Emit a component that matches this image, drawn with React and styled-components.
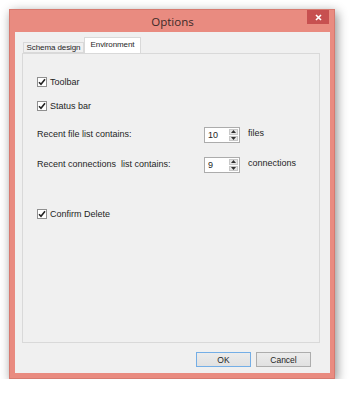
import React from "react";
import styled, { createGlobalStyle } from "styled-components";

const GlobalStyle = createGlobalStyle`
  html, body {
    margin: 0;
    padding: 0;
    background: #ffffff;
  }
  body {
    font-family: "Liberation Sans", Arial, sans-serif;
    font-size: 9px;
    color: #1e1e1e;
  }
`;

const Window = styled.div`
  box-sizing: border-box;
  margin: 9px 0 0 9px;
  width: 326px;
  height: 370px;
  background: #e98b80;
  border: 1px solid #d67a70;
  box-shadow: 2px 3px 10px rgba(0, 0, 0, 0.45);
  padding: 0 4px 5px 5px;
  display: flex;
  flex-direction: column;
`;

const TitleBar = styled.div`
  position: relative;
  height: 22px;
  display: flex;
  align-items: center;
  justify-content: center;
`;

const Title = styled.span`
  font-family: "Open Sans", "Noto Sans", sans-serif;
  font-size: 11.5px;
  color: #3a2a28;
  margin-top: 1px;
`;

const CloseButton = styled.div`
  position: absolute;
  top: 0;
  right: 1px;
  width: 22px;
  height: 14px;
  background: #c75050;
  display: flex;
  align-items: center;
  justify-content: center;
`;

const Client = styled.div`
  flex: 1;
  background: #f0f0f0;
  padding: 6px 10px 0 7px;
  display: flex;
  flex-direction: column;
`;

const TabStrip = styled.div`
  display: flex;
  align-items: flex-end;
  height: 15px;
  padding-left: 1px;
  position: relative;
  z-index: 1;
`;

const Tab = styled.div`
  box-sizing: border-box;
  height: ${(p) => (p.$active ? "16px" : "11px")};
  width: ${(p) => p.$width}px;
  background: ${(p) => (p.$active ? "#ffffff" : "#f0f0f0")};
  border: 1px solid #d9d9d9;
  border-bottom: ${(p) => (p.$active ? "none" : "1px solid #d9d9d9")};
  font-size: 8px;
  letter-spacing: -0.1px;
  white-space: nowrap;
  color: #1e1e1e;
  display: flex;
  align-items: center;
  justify-content: center;
  padding-bottom: ${(p) => (p.$active ? "2px" : "0")};
`;

const Panel = styled.div`
  box-sizing: border-box;
  height: 290px;
  border: 1px solid #d9d9d9;
  background: #f0f0f0;
  padding: 20px 0 0 14px;
  display: flex;
  flex-direction: column;
`;

const Row = styled.div`
  display: flex;
  align-items: ${(p) => (p.$top ? "flex-start" : "center")};
  height: 16px;
  margin-top: ${(p) => p.$gap || 0}px;
`;

const Box = styled.div`
  box-sizing: border-box;
  width: 10px;
  height: 10px;
  border: 1px solid #8f8f8f;
  background: #ffffff;
  display: flex;
  align-items: center;
  justify-content: center;
  margin-right: 3px;
`;

const Label = styled.span`
  width: ${(p) => (p.$width ? `${p.$width}px` : "auto")};
  margin-top: ${(p) => p.$dy || 0}px;
  white-space: pre;
`;

const Spinner = styled.div`
  box-sizing: border-box;
  width: 36px;
  height: 16px;
  border: 1px solid #acacac;
  background: #ffffff;
  display: flex;
  margin-right: 8px;
`;

const SpinValue = styled.span`
  flex: 1;
  padding-left: 3px;
  line-height: 14px;
`;

const SpinButtons = styled.div`
  width: 9px;
  margin: 1px;
  display: flex;
  flex-direction: column;
  gap: 1px;
`;

const SpinArrow = styled.div`
  flex: 1;
  background: #e6e6e6;
  border: 1px solid #c8c8c8;
  box-sizing: border-box;
  display: flex;
  align-items: center;
  justify-content: center;
`;

const Footer = styled.div`
  display: flex;
  justify-content: flex-end;
  gap: 5px;
  padding: 9px 9px 0 0;
`;

const Button = styled.div`
  box-sizing: border-box;
  width: ${(p) => p.$width}px;
  height: 15px;
  border: 1px solid ${(p) => (p.$default ? "#74aee6" : "#adadad")};
  background: linear-gradient(#ececec, #e1e1e1);
  display: flex;
  align-items: center;
  justify-content: center;
  font-size: 8.5px;
  color: #1e1e1e;
`;

const Check = () => (
  <svg width="8" height="8" viewBox="0 0 8 8">
    <path d="M1 4.2 L3 6.3 L7 1.3" fill="none" stroke="#222" strokeWidth="1.6" />
  </svg>
);

const Arrow = ({ up }) => (
  <svg width="5" height="3" viewBox="0 0 5 3">
    <path d={up ? "M0 3 L2.5 0 L5 3 Z" : "M0 0 L2.5 3 L5 0 Z"} fill="#333" />
  </svg>
);

const CheckRow = ({ label, gap }) => (
  <Row $gap={gap}>
    <Box>
      <Check />
    </Box>
    <Label>{label}</Label>
  </Row>
);

const NumberRow = ({ label, value, unit, gap }) => (
  <Row $gap={gap} $top>
    <Label $width={167} $dy={2}>
      {label}
    </Label>
    <Spinner>
      <SpinValue>{value}</SpinValue>
      <SpinButtons>
        <SpinArrow>
          <Arrow up />
        </SpinArrow>
        <SpinArrow>
          <Arrow />
        </SpinArrow>
      </SpinButtons>
    </Spinner>
    <Label $dy={1}>{unit}</Label>
  </Row>
);

export default function App() {
  return (
    <>
      <GlobalStyle />
      <Window>
        <TitleBar>
          <Title>Options</Title>
          <CloseButton>
            <svg width="7" height="7" viewBox="0 0 7 7">
              <path d="M1 1 L6 6 M6 1 L1 6" stroke="#fff" strokeWidth="1.6" />
            </svg>
          </CloseButton>
        </TitleBar>
        <Client>
          <TabStrip>
            <Tab $width={61}>Schema design</Tab>
            <Tab $width={57} $active>
              Environment
            </Tab>
          </TabStrip>
          <Panel>
            <CheckRow label="Toolbar" />
            <CheckRow label="Status bar" gap={8} />
            <NumberRow label="Recent file list contains:" value="10" unit="files" gap={13} />
            <NumberRow
              label="Recent connections  list contains:"
              value="9"
              unit="connections"
              gap={14}
            />
            <CheckRow label="Confirm Delete" gap={33} />
          </Panel>
          <Footer>
            <Button $width={55} $default>
              OK
            </Button>
            <Button $width={55}>Cancel</Button>
          </Footer>
        </Client>
      </Window>
    </>
  );
}
